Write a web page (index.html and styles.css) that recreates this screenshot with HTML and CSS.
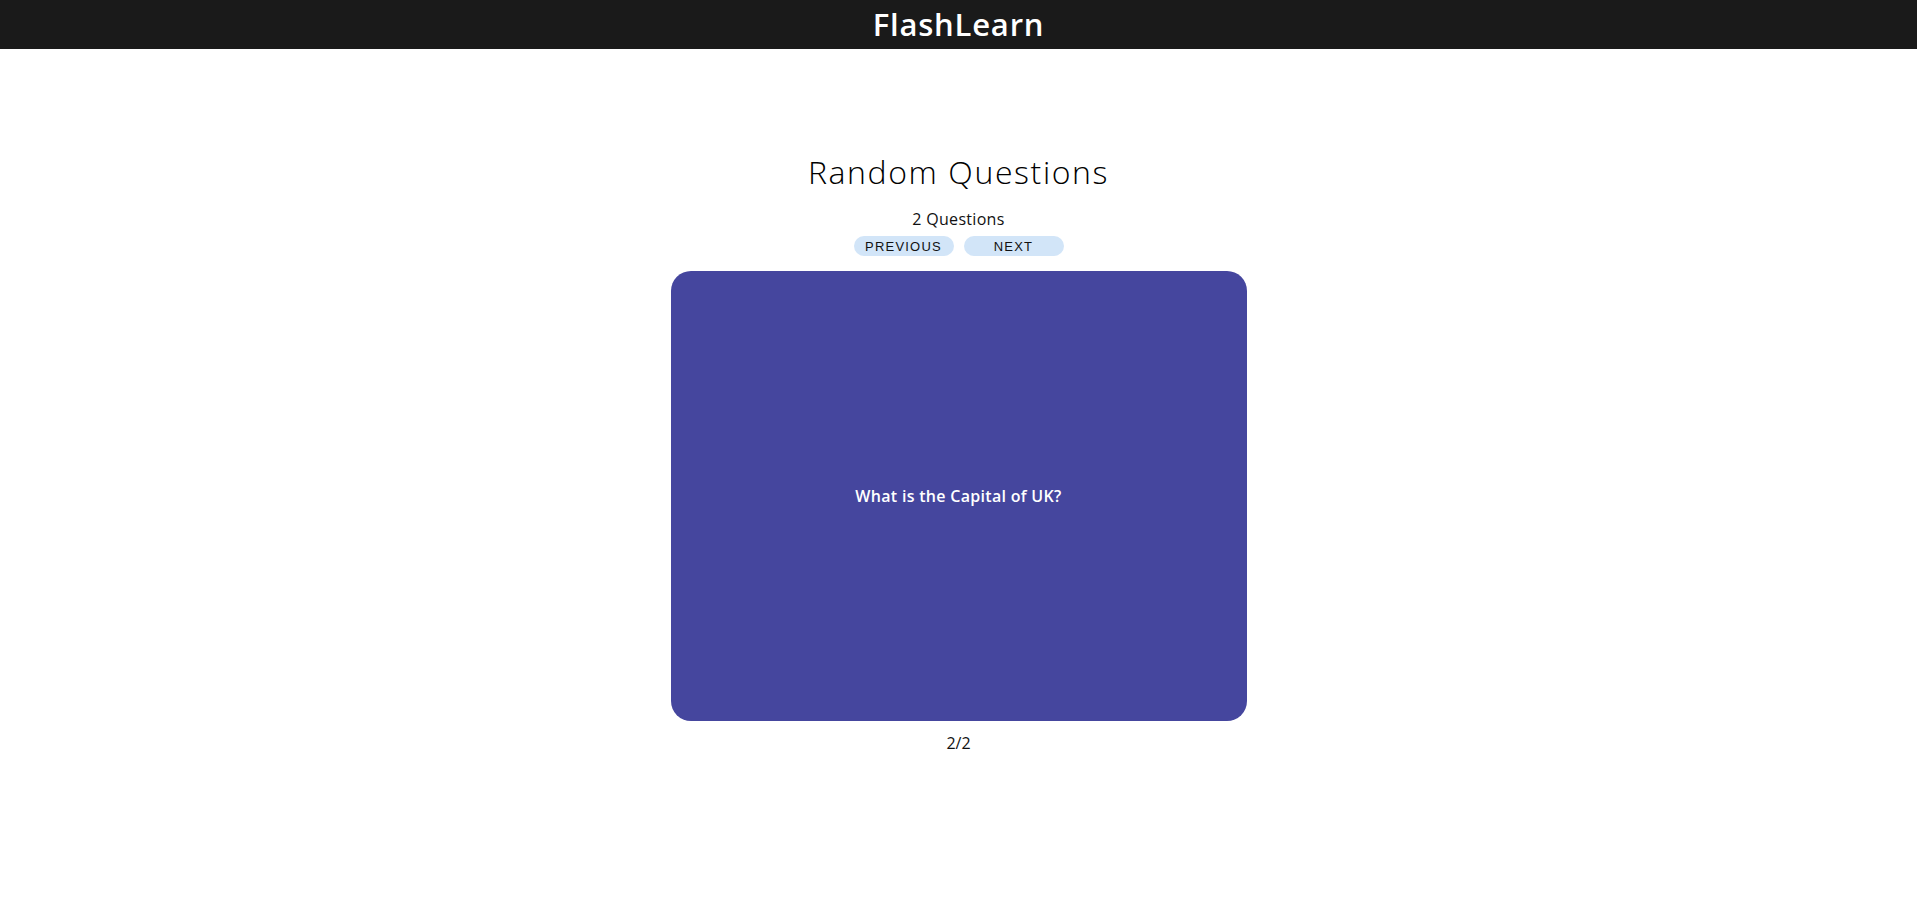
FILE: index.html
```html
<!DOCTYPE html>
<html>
<head>
<meta charset="utf-8">
<link rel="stylesheet" href="styles.css">
</head>
<body>
<header class="topbar"><span class="brand">FlashLearn</span></header>
<main class="deck">
  <h1 class="deck-title">Random Questions</h1>
  <p class="deck-count">2 Questions</p>
  <div class="nav">
    <button class="nav-btn">PREVIOUS</button>
    <button class="nav-btn">NEXT</button>
  </div>
  <div class="card"><span class="card-text">What is the Capital of UK?</span></div>
  <p class="progress">2/2</p>
</main>
</body>
</html>
```
FILE: styles.css
```css
* { box-sizing: border-box; }
body {
  margin: 0;
  background: #fff;
  font-family: "Open Sans", "Noto Sans", sans-serif;
  color: #111;
}
.topbar {
  height: 49px;
  background: #1a1a1a;
  display: flex;
  align-items: center;
  justify-content: center;
}
.brand {
  color: #fff;
  font-size: 31px;
  font-weight: 600;
  letter-spacing: 0.8px;
  line-height: 1;
}
.deck {
  display: flex;
  flex-direction: column;
  align-items: center;
  padding-top: 101px;
}
.deck-title {
  margin: 0;
  font-size: 32px;
  font-weight: 300;
  letter-spacing: 1.6px;
  line-height: 44px;
  color: #000;
}
.deck-count {
  margin: 15px 0 0;
  font-size: 16px;
  letter-spacing: 0.3px;
  line-height: 20px;
}
.nav {
  display: flex;
  gap: 10px;
  margin-top: 7px;
}
.nav-btn {
  width: 100px;
  height: 20px;
  border: 0;
  border-radius: 10px;
  background: #d2e5f8;
  font-family: "Liberation Sans", Arial, sans-serif;
  font-size: 13px;
  letter-spacing: 1.2px;
  color: #111;
  padding: 0;
}
.card {
  margin-top: 15px;
  width: 576px;
  height: 450px;
  background: #45469e;
  border-radius: 20px;
  display: flex;
  align-items: center;
  justify-content: center;
}
.card-text {
  color: #fff;
  font-size: 16px;
  font-weight: 600;
  letter-spacing: 0.3px;
}
.progress {
  margin: 11px 0 0;
  font-size: 16px;
}
```
